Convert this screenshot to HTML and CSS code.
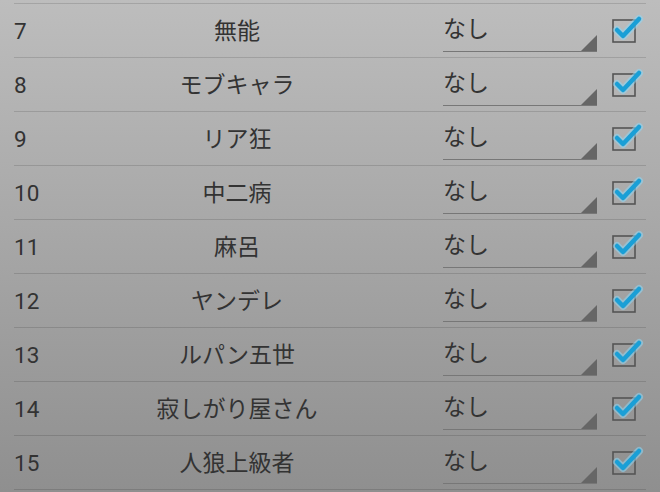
FILE: index.html
```html
<!DOCTYPE html>
<html lang="ja">
<head>
<meta charset="utf-8">
<link rel="stylesheet" href="styles.css">
</head>
<body>
<div class="list">
  <div class="sep"></div>
  <div class="row"><span class="num">7</span><span class="name">無能</span><div class="spinner"><span class="val">なし</span><span class="tri"></span></div><div class="cb"><svg viewBox="0 0 30 30" width="30" height="30"><rect x="1" y="5" width="22" height="22" class="box"/><path d="M5 15 L11 21 L27 4" class="glow"/><path d="M5 15 L11 21 L27 4" class="tick"/></svg></div></div>
  <div class="sep"></div>
  <div class="row"><span class="num">8</span><span class="name">モブキャラ</span><div class="spinner"><span class="val">なし</span><span class="tri"></span></div><div class="cb"><svg viewBox="0 0 30 30" width="30" height="30"><rect x="1" y="5" width="22" height="22" class="box"/><path d="M5 15 L11 21 L27 4" class="glow"/><path d="M5 15 L11 21 L27 4" class="tick"/></svg></div></div>
  <div class="sep"></div>
  <div class="row"><span class="num">9</span><span class="name">リア狂</span><div class="spinner"><span class="val">なし</span><span class="tri"></span></div><div class="cb"><svg viewBox="0 0 30 30" width="30" height="30"><rect x="1" y="5" width="22" height="22" class="box"/><path d="M5 15 L11 21 L27 4" class="glow"/><path d="M5 15 L11 21 L27 4" class="tick"/></svg></div></div>
  <div class="sep"></div>
  <div class="row"><span class="num">10</span><span class="name">中二病</span><div class="spinner"><span class="val">なし</span><span class="tri"></span></div><div class="cb"><svg viewBox="0 0 30 30" width="30" height="30"><rect x="1" y="5" width="22" height="22" class="box"/><path d="M5 15 L11 21 L27 4" class="glow"/><path d="M5 15 L11 21 L27 4" class="tick"/></svg></div></div>
  <div class="sep"></div>
  <div class="row"><span class="num">11</span><span class="name">麻呂</span><div class="spinner"><span class="val">なし</span><span class="tri"></span></div><div class="cb"><svg viewBox="0 0 30 30" width="30" height="30"><rect x="1" y="5" width="22" height="22" class="box"/><path d="M5 15 L11 21 L27 4" class="glow"/><path d="M5 15 L11 21 L27 4" class="tick"/></svg></div></div>
  <div class="sep"></div>
  <div class="row"><span class="num">12</span><span class="name">ヤンデレ</span><div class="spinner"><span class="val">なし</span><span class="tri"></span></div><div class="cb"><svg viewBox="0 0 30 30" width="30" height="30"><rect x="1" y="5" width="22" height="22" class="box"/><path d="M5 15 L11 21 L27 4" class="glow"/><path d="M5 15 L11 21 L27 4" class="tick"/></svg></div></div>
  <div class="sep"></div>
  <div class="row"><span class="num">13</span><span class="name">ルパン五世</span><div class="spinner"><span class="val">なし</span><span class="tri"></span></div><div class="cb"><svg viewBox="0 0 30 30" width="30" height="30"><rect x="1" y="5" width="22" height="22" class="box"/><path d="M5 15 L11 21 L27 4" class="glow"/><path d="M5 15 L11 21 L27 4" class="tick"/></svg></div></div>
  <div class="sep"></div>
  <div class="row"><span class="num">14</span><span class="name">寂しがり屋さん</span><div class="spinner"><span class="val">なし</span><span class="tri"></span></div><div class="cb"><svg viewBox="0 0 30 30" width="30" height="30"><rect x="1" y="5" width="22" height="22" class="box"/><path d="M5 15 L11 21 L27 4" class="glow"/><path d="M5 15 L11 21 L27 4" class="tick"/></svg></div></div>
  <div class="sep"></div>
  <div class="row"><span class="num">15</span><span class="name">人狼上級者</span><div class="spinner"><span class="val">なし</span><span class="tri"></span></div><div class="cb"><svg viewBox="0 0 30 30" width="30" height="30"><rect x="1" y="5" width="22" height="22" class="box"/><path d="M5 15 L11 21 L27 4" class="glow"/><path d="M5 15 L11 21 L27 4" class="tick"/></svg></div></div>
  <div class="sep"></div>
</div>
</body>
</html>
```
FILE: styles.css
```css
html, body {
  margin: 0;
  padding: 0;
  height: 100%;
}
body {
  width: 660px;
  height: 492px;
  overflow: hidden;
  background: linear-gradient(to bottom, #bdbdbd 0%, #a6a6a6 50%, #8f8f8f 100%);
  font-family: Roboto, "Noto Sans CJK JP", sans-serif;
  color: #333;
}
.list {
  padding: 3px 14px 0 14px;
}
.sep {
  height: 1px;
  background: rgba(0, 0, 0, 0.13);
}
.row {
  height: 53px;
  display: flex;
  align-items: center;
}
.num {
  width: 26px;
  font-size: 22.5px;
  font-family: Roboto, sans-serif;
  padding-top: 1px;
}
.name {
  flex: 1;
  text-align: center;
  font-size: 23px;
  line-height: 30px;
  padding-bottom: 4px;
  font-family: "Noto Sans CJK JP", sans-serif;
}
.spinner {
  position: relative;
  width: 154px;
  height: 46px;
  margin-left: 9px;
  box-sizing: border-box;
  border-bottom: 1.5px solid #777;
  align-self: flex-start;
  margin-top: 2px;
}
.val {
  display: block;
  font-family: "Noto Sans CJK JP", sans-serif;
  font-size: 23px;
  line-height: 28px;
  margin-top: 7px;
}
.tri {
  position: absolute;
  right: 0;
  bottom: 0;
  width: 0;
  height: 0;
  border-left: 16px solid transparent;
  border-bottom: 16px solid #666;
}
.cb {
  width: 22px;
  height: 22px;
  margin-left: 16px;
  margin-right: 11px;
  position: relative;
  align-self: flex-start;
  margin-top: 16px;
}
.cb svg {
  position: absolute;
  left: -1px;
  top: -5px;
  overflow: visible;
}
.box {
  fill: none;
  stroke: #555;
  stroke-width: 1.6;
}
.glow {
  fill: none;
  stroke: rgba(140, 215, 245, 0.55);
  stroke-width: 8;
  stroke-linecap: round;
  stroke-linejoin: round;
}
.tick {
  fill: none;
  stroke: #1a9fd6;
  stroke-width: 4.5;
  stroke-linecap: round;
  stroke-linejoin: round;
}
```
